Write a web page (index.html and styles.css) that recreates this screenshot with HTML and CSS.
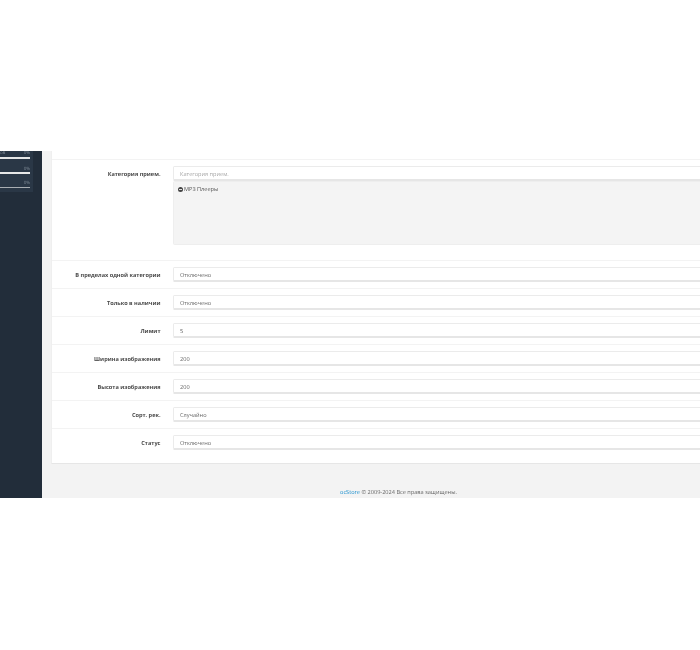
FILE: index.html
```html
<!DOCTYPE html>
<html lang="ru">
<head>
    <meta charset="UTF-8">
    <title>ocStore</title>
    <link rel="stylesheet" href="styles.css">
</head>
<body>

<div class="frame">
    <div class="app">
        <div class="sidebar">
            <div class="stats">
                <div class="stat">
                    <div class="stat-text"><span>ов</span><span>0%</span></div>
                    <div class="bar"></div>
                </div>
                <div class="stat">
                    <div class="stat-text"><span></span><span>0%</span></div>
                    <div class="bar"></div>
                </div>
                <div class="stat">
                    <div class="stat-text"><span></span><span>0%</span></div>
                    <div class="bar bar-dim"></div>
                </div>
            </div>
        </div>

        <div class="content">
            <div class="panel">
                <div class="row row-category">
                    <label class="label">Категория прием.</label>
                    <div class="field">
                        <div class="input placeholder">Категория прием.</div>
                        <div class="well">
                            <div class="well-item"><span class="minus"></span>MP3 Плееры</div>
                        </div>
                    </div>
                </div>
                <div class="row">
                    <label class="label">В пределах одной категории</label>
                    <div class="field"><div class="input">Отключено</div></div>
                </div>
                <div class="row">
                    <label class="label">Только в наличии</label>
                    <div class="field"><div class="input">Отключено</div></div>
                </div>
                <div class="row">
                    <label class="label">Лимит</label>
                    <div class="field"><div class="input">5</div></div>
                </div>
                <div class="row">
                    <label class="label">Ширина изображения</label>
                    <div class="field"><div class="input">200</div></div>
                </div>
                <div class="row">
                    <label class="label">Высота изображения</label>
                    <div class="field"><div class="input">200</div></div>
                </div>
                <div class="row">
                    <label class="label">Сорт. рек.</label>
                    <div class="field"><div class="input">Случайно</div></div>
                </div>
                <div class="row">
                    <label class="label">Статус</label>
                    <div class="field"><div class="input">Отключено</div></div>
                </div>
            </div>
            <div class="footer"><a href="#">ocStore</a> © 2009-2024 Все права защищены.</div>
        </div>
    </div>
</div>

</body>
</html>
```

FILE: styles.css
```css
html, body {
    margin: 0;
    background: #fff;
    overflow: hidden;
}
body {
    font-family: "Open Sans", sans-serif;
    font-size: 5.6px;
    color: #666;
    text-rendering: geometricPrecision;
}
.frame {
    width: 700px;
    height: 347px;
    margin-top: 151px;
    overflow: hidden;
    will-change: transform;
}
.app {
    display: flex;
    width: 746px;
    height: 347px;
}
.sidebar {
    width: 42px;
    flex-shrink: 0;
    background: #222d3a;
}
.stats {
    width: 33px;
    height: 41px;
    background: #2a3746;
    box-sizing: border-box;
    padding-right: 3px;
}
.stat {
    height: 14.5px;
}
.stat-text {
    display: flex;
    justify-content: space-between;
    height: 6px;
    font-size: 4.5px;
    line-height: 6px;
    color: #7d8894;
    margin-bottom: 0.5px;
}
.stat:first-child .stat-text {
    height: 5.5px;
    line-height: 5px;
}
.bar {
    height: 1.5px;
    background: #e6e7e8;
}
.bar-dim {
    background: #a9aeb3;
}
.content {
    flex: 1;
    display: flex;
    flex-direction: column;
    background: #f3f3f3;
    padding-left: 9px;
}
.panel {
    background: #fff;
    padding-top: 8px;
    border-bottom: 1px solid #e6e6e6;
    border-left: 1px solid #efefef;
}
.row {
    display: flex;
    height: 28px;
    box-sizing: border-box;
    padding-top: 6px;
    border-top: 1px solid #f3f3f3;
}
.row-category {
    height: 101px;
}
.row:last-child {
    height: 35px;
}
.label {
    width: 115px;
    padding-right: 6.5px;
    box-sizing: border-box;
    flex-shrink: 0;
    margin-right: 6px;
    text-align: right;
    font-weight: 700;
    color: #4a4a4a;
    line-height: 16px;
}
.field {
    flex: 1;
}
.input {
    height: 15px;
    box-sizing: border-box;
    padding-left: 6px;
    line-height: 14.5px;
    background: #fff;
    border: 1px solid #ebebeb;
    border-bottom: 2px solid #e6e6e6;
    border-radius: 1.5px;
    color: #666;
}
.placeholder {
    color: #a6a6a6;
}
.well {
    height: 64px;
    box-sizing: border-box;
    padding: 3px 4px;
    background: #f4f4f4;
    border: 1px solid #eeeeee;
    border-radius: 1.5px;
}
.well-item {
    display: flex;
    align-items: center;
    gap: 1px;
    line-height: 8px;
    color: #555;
}
.minus {
    position: relative;
    width: 5px;
    height: 5px;
    border-radius: 50%;
    background: #444;
}
.minus::after {
    content: "";
    position: absolute;
    left: 1px;
    right: 1px;
    top: 2px;
    height: 1px;
    background: #ddd;
}
.footer {
    margin-top: 24px;
    text-align: center;
    line-height: 8px;
    color: #666;
}
.footer a {
    color: #1e91cf;
    text-decoration: none;
}
```
